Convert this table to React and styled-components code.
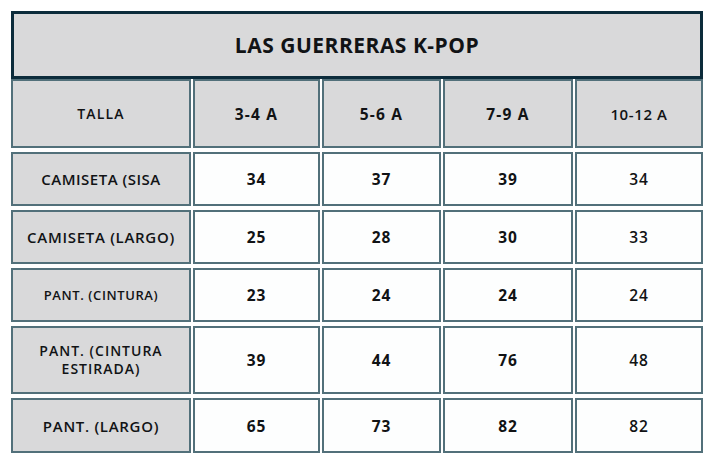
import React from "react";
import styled, { createGlobalStyle } from "styled-components";

const GlobalStyle = createGlobalStyle`
    html, body {
        margin: 0;
        padding: 0;
        background: #ffffff;
    }
    body {
        font-family: "Open Sans", "Liberation Sans", sans-serif;
        color: #121416;
    }
`;

const Page = styled.div`
    width: 714px;
    height: 462px;
    padding: 11px 0 0 11px;
    box-sizing: border-box;
`;

const TitleBox = styled.div`
    width: 692px;
    height: 68px;
    box-sizing: border-box;
    border: 3px solid #0c2c3b;
    background: #d9d9da;
    display: flex;
    align-items: center;
    justify-content: center;
    font-size: 21px;
    font-weight: 700;
    letter-spacing: 0.5px;
    color: #111315;
`;

const SizeGrid = styled.div`
    display: grid;
    width: 692px;
    grid-template-columns: 180px 127px 119px 130px 128px;
    grid-template-rows: 69px 54px 54px 54px 68px 55px;
    column-gap: 2px;
    row-gap: 4px;
`;

const Cell = styled.div`
    box-sizing: border-box;
    border: 2px solid #52707a;
    background: ${(p) => (p.$shaded ? "#d9d9da" : "#fdfefe")};
    display: flex;
    align-items: center;
    justify-content: center;
    text-align: center;
    font-size: ${(p) => p.$size || 15}px;
    font-weight: ${(p) => p.$weight || 700};
    letter-spacing: ${(p) => p.$spacing ?? 1}px;
    line-height: ${(p) => p.$leading || 18}px;
    padding: 0 4px;
    color: #111315;
    text-transform: uppercase;
`;

const headers = ["3-4 A", "5-6 A", "7-9 A", "10-12 A"];

const rows = [
    { label: "CAMISETA (SISA", size: 15, spacing: 0.5, values: ["34", "37", "39", "34"] },
    { label: "CAMISETA (LARGO)", size: 15, spacing: 0.7, values: ["25", "28", "30", "33"] },
    { label: "PANT. (CINTURA)", size: 13, spacing: 0.6, values: ["23", "24", "24", "24"] },
    { label: "PANT. (CINTURA ESTIRADA)", size: 14, spacing: 1, values: ["39", "44", "76", "48"] },
    { label: "PANT. (LARGO)", size: 15, spacing: 0.7, values: ["65", "73", "82", "82"] },
];

export default function App() {
    return (
        <Page>
            <GlobalStyle />
            <TitleBox>LAS GUERRERAS K-POP</TitleBox>
            <SizeGrid>
                <Cell $shaded $size={14} $spacing={1.2} $weight={600}>TALLA</Cell>
                {headers.map((h, i) => (
                    <Cell
                        key={h}
                        $shaded
                        $size={i === 3 ? 15 : 15.5}
                        $spacing={i === 3 ? 0.6 : 1.2}
                        $weight={i === 3 ? 600 : 700}
                    >
                        {h}
                    </Cell>
                ))}
                {rows.map((row) => (
                    <React.Fragment key={row.label}>
                        <Cell $shaded $size={row.size} $spacing={row.spacing} $weight={600}>
                            {row.label === "PANT. (CINTURA ESTIRADA)" ? (
                                <span>PANT. (CINTURA<br />ESTIRADA)</span>
                            ) : (
                                row.label
                            )}
                        </Cell>
                        {row.values.map((v, i) => (
                            <Cell key={i} $size={15.5} $spacing={1} $weight={i === 3 ? 600 : 700}>
                                {v}
                            </Cell>
                        ))}
                    </React.Fragment>
                ))}
            </SizeGrid>
        </Page>
    );
}
